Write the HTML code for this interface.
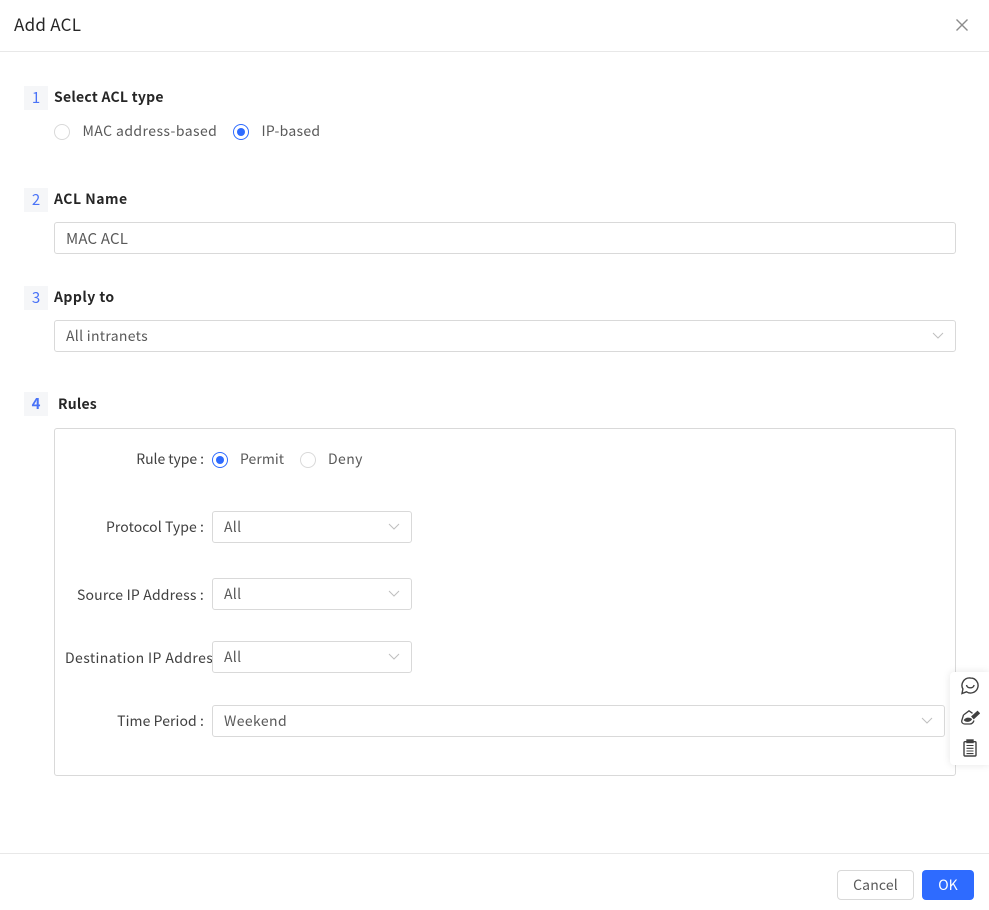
<!DOCTYPE html>
<html>
<head>
<meta charset="utf-8">
<style>
html,body{margin:0;padding:0;background:#fff}
body{width:989px;height:910px;position:relative;overflow:hidden;font-family:"Noto Sans CJK SC","Liberation Sans",sans-serif;font-size:14px;color:#595959}
.a{position:absolute;white-space:nowrap;line-height:20px;letter-spacing:.4px}
.line{position:absolute;left:0;width:989px;height:1px;background:#e8e8e8}
.num{position:absolute;left:24px;width:24px;height:24px;background:#f5f6f8;color:#4a73f7;text-align:center;line-height:24px;font-size:15px}
.h{position:absolute;font-weight:700;color:#262626;line-height:20px;white-space:nowrap;font-size:14px;letter-spacing:.25px}
.box{position:absolute;box-sizing:border-box;border:1px solid #d9d9d9;border-radius:3px;background:#fff;height:32px;line-height:30px;padding-left:11px;color:#595959;white-space:nowrap;letter-spacing:.3px}
.chev{position:absolute;width:12px;height:7px}
.r{position:absolute;box-sizing:border-box;width:16px;height:16px;border-radius:50%;border:1px solid #d9d9d9;background:#fff}
.r.on{border-color:#2e6bff}
.r.on:after{content:"";position:absolute;left:3px;top:3px;width:8px;height:8px;border-radius:50%;background:#2e6bff}
.lab{position:absolute;text-align:right;color:#404040;white-space:nowrap;line-height:20px;overflow:hidden;letter-spacing:.25px}
</style>
</head>
<body>
<div class="a" style="left:14px;top:14px;font-size:17px;color:#262626;letter-spacing:.25px">Add ACL</div>
<svg style="position:absolute;left:955px;top:18px" width="14" height="14" viewBox="0 0 14 14"><path d="M1.5 1.5L12.5 12.5M12.5 1.5L1.5 12.5" stroke="#8c8c8c" stroke-width="1.4" fill="none"/></svg>
<div class="line" style="top:51px"></div>

<div class="num" style="top:86px">1</div>
<div class="h" style="left:54px;top:87px">Select ACL type</div>
<div class="r" style="left:54px;top:124px"></div>
<div class="a" style="left:82.500px;top:121px;letter-spacing:.43px">MAC address-based</div>
<div class="r on" style="left:233px;top:124px"></div>
<div class="a" style="left:261.500px;top:121px;letter-spacing:.28px">IP-based</div>

<div class="num" style="top:188px">2</div>
<div class="h" style="left:54px;top:189px;letter-spacing:.5px">ACL Name</div>
<div class="box" style="left:54px;top:222px;width:902px;line-height:32px;font-size:15px;letter-spacing:.2px">MAC ACL</div>

<div class="num" style="top:286px">3</div>
<div class="h" style="left:54px;top:287px;letter-spacing:.45px">Apply to</div>
<div class="box" style="left:54px;top:320px;width:902px">All intranets</div>
<svg class="chev" style="left:932px;top:332px" viewBox="0 0 12 7"><path d="M1 1L6 6L11 1" stroke="#bfbfbf" fill="none"/></svg>

<div class="num" style="top:392px;font-weight:700">4</div>
<div class="h" style="left:58px;top:394px;letter-spacing:.2px">Rules</div>
<div style="position:absolute;left:54px;top:428px;width:902px;height:348px;box-sizing:border-box;border:1px solid #d9d9d9;border-radius:3px"></div>

<div class="lab" style="left:60px;width:144px;top:449px;letter-spacing:-.05px">Rule type :</div>
<div class="r on" style="left:212px;top:452px"></div>
<div class="a" style="left:240px;top:449px;letter-spacing:.05px">Permit</div>
<div class="r" style="left:300px;top:452px"></div>
<div class="a" style="left:328px;top:449px">Deny</div>

<div class="lab" style="left:60px;width:144px;top:517px;letter-spacing:.07px">Protocol Type :</div>
<div class="box" style="left:212px;top:511px;width:200px">All</div>
<svg class="chev" style="left:388px;top:523px" viewBox="0 0 12 7"><path d="M1 1L6 6L11 1" stroke="#bfbfbf" fill="none"/></svg>

<div class="lab" style="left:60px;width:144px;top:585px;letter-spacing:.19px">Source IP Address :</div>
<div class="box" style="left:212px;top:578px;width:200px">All</div>
<svg class="chev" style="left:388px;top:590px" viewBox="0 0 12 7"><path d="M1 1L6 6L11 1" stroke="#bfbfbf" fill="none"/></svg>

<div class="lab" style="left:65px;width:147px;top:648px;text-align:left;letter-spacing:.4px">Destination IP Address :</div>
<div class="box" style="left:212px;top:641px;width:200px">All</div>
<svg class="chev" style="left:388px;top:653px" viewBox="0 0 12 7"><path d="M1 1L6 6L11 1" stroke="#bfbfbf" fill="none"/></svg>

<div class="lab" style="left:60px;width:144px;top:711px;letter-spacing:.08px">Time Period :</div>
<div class="box" style="left:212px;top:705px;width:733px;letter-spacing:.4px">Weekend</div>
<svg class="chev" style="left:921px;top:717px" viewBox="0 0 12 7"><path d="M1 1L6 6L11 1" stroke="#bfbfbf" fill="none"/></svg>

<div style="position:absolute;left:950px;top:672px;width:39px;height:93px;background:#fff;border-radius:4px 0 0 4px;box-shadow:0 0 8px rgba(0,0,0,.1)"></div>
<svg style="position:absolute;left:961px;top:677px" width="18" height="18" viewBox="0 0 18 18" fill="none" stroke="#404040" stroke-width="1.4"><path d="M9.500 1a7.500 7.500 0 1 1-4 13.800L1 16.500l.900-4.500A7.500 7.500 0 0 1 9.500 1z"/><path d="M5.500 8c.600 3.800 7 3.800 7.600 0"/></svg>
<svg style="position:absolute;left:961px;top:708px" width="19" height="18" viewBox="0 0 19 18" fill="none" stroke="#404040" stroke-width="1.300"><path d="M2.500 7L8 2.800l3.500 2.500M2.500 7L.800 12.500c-.500 2 1 3.500 3 3.500h5c2.500 0 3.500-1.500 4.200-3.500"/><path d="M3.500 12c2-2.200 5-2.200 6.800-.7-1.300 2.200-5.300 2.700-6.800.7z" fill="#404040"/><path d="M11 8.500l5.500-5 1.800 1.800-5.500 5.200z" fill="#404040"/></svg>
<svg style="position:absolute;left:961px;top:739px" width="18" height="18" viewBox="0 0 18 18" fill="none" stroke="#404040" stroke-width="1.400"><rect x="3" y="2.700" width="12" height="14.300" rx="1"/><rect x="6" y="1" width="6" height="2.500" fill="#404040"/><path d="M5.500 6.500h7M5.500 9.300h7M5.500 12h7M5.500 14.600h7" stroke-width="1.100"/></svg>

<div class="line" style="top:853px"></div>
<div class="box" style="left:837px;top:870px;width:77px;height:30px;line-height:28px;padding:0;text-align:center;color:#595959;border-radius:4px;letter-spacing:.15px">Cancel</div>
<div style="position:absolute;left:922px;top:870px;width:52px;height:30px;background:#2e6bff;border-radius:4px;color:#fff;text-align:center;line-height:30px">OK</div>
</body>
</html>
